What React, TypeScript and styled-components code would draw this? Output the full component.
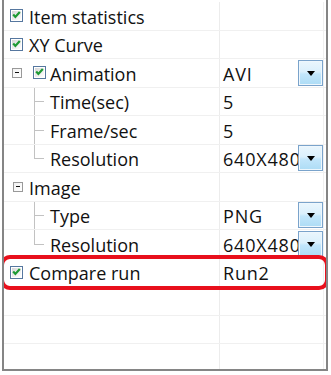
import React from 'react';
import styled, { createGlobalStyle } from 'styled-components';

type Item = {
  name: string;
  value?: string;
  kind: 'check' | 'group' | 'groupCheck' | 'child' | 'empty';
  last?: boolean;
  dropdown?: boolean;
};

const items: Item[] = [
  { name: 'Item statistics', kind: 'check' },
  { name: 'XY Curve', kind: 'check' },
  { name: 'Animation', kind: 'groupCheck', value: 'AVI', dropdown: true },
  { name: 'Time(sec)', kind: 'child', value: '5' },
  { name: 'Frame/sec', kind: 'child', value: '5' },
  { name: 'Resolution', kind: 'child', value: '640X480', dropdown: true, last: true },
  { name: 'Image', kind: 'group' },
  { name: 'Type', kind: 'child', value: 'PNG', dropdown: true },
  { name: 'Resolution', kind: 'child', value: '640X480', dropdown: true, last: true },
  { name: 'Compare run', kind: 'check', value: 'Run2' },
  { name: '', kind: 'empty' },
  { name: '', kind: 'empty' },
  { name: '', kind: 'empty' },
];

const GlobalStyle = createGlobalStyle`
  body {
    margin: 0;
    background: #ffffff;
    font-family: "Open Sans", "Noto Sans", sans-serif;
  }
`;

const CheckBox = () => (
  <svg width="13" height="13" viewBox="0 0 13 13">
    <defs>
      <linearGradient id="cbfill" x1="0" y1="0" x2="1" y2="1">
        <stop offset="0" stopColor="#d6d6d6" />
        <stop offset="1" stopColor="#ffffff" />
      </linearGradient>
    </defs>
    <rect x="0.5" y="0.5" width="12" height="12" fill="#ffffff" stroke="#56779f" />
    <rect x="2" y="2" width="9" height="9" fill="url(#cbfill)" />
    <path d="M3.2 5.4 L5.4 7.9 L9.8 3" fill="none" stroke="#1d9a33" strokeWidth="2.2" />
  </svg>
);

export default function App() {
  return (
    <>
      <GlobalStyle />
      <Frame>
        {items.map((item, i) => (
          <Row key={i}>
            <NameCell>
              {item.kind === 'check' && (
                <>
                  <Slot $w={25}>
                    <CheckBox />
                  </Slot>
                  <Label>{item.name}</Label>
                </>
              )}
              {item.kind === 'groupCheck' && (
                <>
                  <Slot $w={24}>
                    <Expander />
                  </Slot>
                  <Slot $w={22}>
                    <CheckBox />
                  </Slot>
                  <Label>{item.name}</Label>
                </>
              )}
              {item.kind === 'group' && (
                <>
                  <Slot $w={25}>
                    <Expander />
                  </Slot>
                  <Label>{item.name}</Label>
                </>
              )}
              {item.kind === 'child' && (
                <>
                  <Slot $w={24} />
                  <TreeLine $last={!!item.last} />
                  <Label>{item.name}</Label>
                </>
              )}
            </NameCell>
            <ValueCell>
              <Value>{item.value}</Value>
              {item.dropdown && (
                <DropButton>
                  <Arrow />
                </DropButton>
              )}
            </ValueCell>
          </Row>
        ))}
        <Highlight />
      </Frame>
    </>
  );
}

const Frame = styled.div`
  position: relative;
  box-sizing: border-box;
  margin-left: 2px;
  width: 326px;
  height: 371px;
  padding-top: 2px;
  border: 2px solid #858585;
  border-top: none;
  overflow: hidden;
`;

const Row = styled.div`
  box-sizing: border-box;
  display: grid;
  grid-template-columns: 216px 104px;
  height: 28.5px;
  border-bottom: 1px solid #f0f0f0;
`;

const NameCell = styled.div`
  display: flex;
  align-items: center;
  border-right: 1px solid #ececec;
  color: #111;
  font-size: 18px;
  white-space: nowrap;
  overflow: hidden;
`;

const Slot = styled.div<{ $w: number }>`
  flex: none;
  width: ${(p) => p.$w}px;
  height: 100%;
  display: flex;
  align-items: center;
  justify-content: center;
`;

const Label = styled.span`
  padding-top: 2px;
`;

const Expander = styled.div`
  box-sizing: border-box;
  position: relative;
  width: 10px;
  height: 10px;
  margin-left: 2px;
  border: 1px solid #999;
  background: linear-gradient(135deg, #f2f2f2, #ffffff);

  &::after {
    content: '';
    position: absolute;
    left: 2px;
    top: 3.5px;
    width: 4px;
    height: 1px;
    background: #111;
  }
`;

const TreeLine = styled.div<{ $last: boolean }>`
  flex: none;
  position: relative;
  width: 22px;
  height: 100%;

  &::before {
    content: '';
    position: absolute;
    left: 6px;
    top: 0;
    width: 1px;
    height: ${(p) => (p.$last ? '50%' : '100%')};
    background: #c2c2c2;
  }

  &::after {
    content: '';
    position: absolute;
    left: 6px;
    top: 50%;
    width: 10px;
    height: 1px;
    background: #c2c2c2;
  }
`;

const ValueCell = styled.div`
  display: flex;
  align-items: center;
  border-right: 1px solid #f0f0f0;
  overflow: hidden;
`;

const Value = styled.span`
  flex: 1;
  min-width: 0;
  padding-left: 3px;
  padding-top: 2px;
  font-size: 18px;
  letter-spacing: 0.8px;
  color: #111;
  white-space: nowrap;
  overflow: hidden;
`;

const DropButton = styled.div`
  flex: none;
  box-sizing: border-box;
  width: 25px;
  height: 26px;
  display: flex;
  align-items: center;
  justify-content: center;
  border: 1px solid #7aa3cb;
  box-shadow: inset 0 0 0 1px #eef7fd;
  background: linear-gradient(#eaf6fd 0%, #dbf0fc 45%, #c2e6fb 55%, #addcf5 100%);
`;

const Arrow = styled.div`
  width: 0;
  height: 0;
  border-left: 4px solid transparent;
  border-right: 4px solid transparent;
  border-top: 5px solid #000;
  margin-top: 1px;
`;

const Highlight = styled.div`
  position: absolute;
  left: -4px;
  top: 255px;
  width: 329px;
  height: 35px;
  box-sizing: border-box;
  border: 4px solid #e8101c;
  border-radius: 10px;
  pointer-events: none;
`;
